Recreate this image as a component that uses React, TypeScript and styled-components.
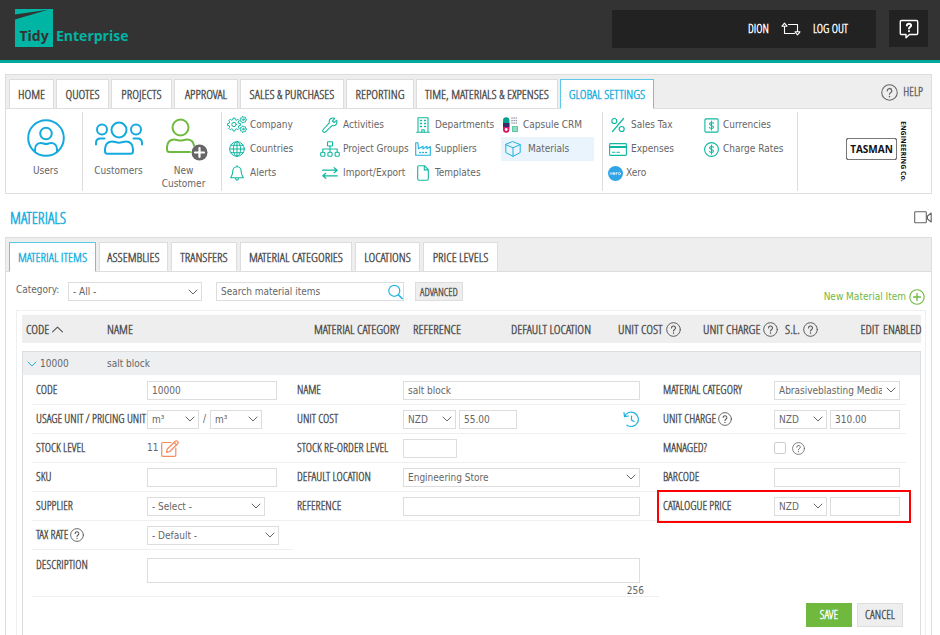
import React from "react";
import styled, { createGlobalStyle, css } from "styled-components";

const c = {
  dark: "#333333",
  darker: "#222222",
  teal: "#00b5a3",
  line: "#dddddd",
  soft: "#efefef",
  strip: "#eeeeee",
  text: "#666666",
  label: "#555555",
  blue: "#1fb1e0",
  green: "#6fb93f",
  orange: "#f58b62",
};

const narrow = `"Open Sans Condensed Light", "Open Sans Condensed", "Liberation Sans Narrow", sans-serif`;
const body = `"DejaVu Sans Condensed", "DejaVu Sans", sans-serif`;

const GlobalStyle = createGlobalStyle`
  * { box-sizing: border-box; }
  body {
    margin: 0; background: #fff; color: ${c.text}; font: 10px/12px ${body};
    fill: none; stroke: currentColor; stroke-linecap: round; stroke-linejoin: round;
  }
  svg { display: block; flex: none; }
  button, input, select, textarea { font: inherit; color: inherit; margin: 0; }
  a { color: inherit; text-decoration: none; }
`;

/* ---------- icons ---------- */

const HelpIcon = ({ size = 15 }: { size?: number }) => (
  <svg width={size} height={size} viewBox="0 0 16 16">
    <circle cx="8" cy="8" r="7.3" />
    <path d="M5.9 6.4a2.1 2.1 0 1 1 3.1 1.8c-.7.4-1 .7-1 1.4" strokeWidth="1.2" />
    <path d="M8 11.7v.2" strokeWidth="1.4" />
  </svg>
);

const Chevron = ({ size = 10, up = false }: { size?: number; up?: boolean }) => (
  <svg width={size} height={size} viewBox="0 0 10 10" strokeWidth="1">
    <path d={up ? "M.5 7.2 5 2.8l4.5 4.4" : "M1 3l4 4 4-4"} />
  </svg>
);

const UsersIcon = () => (
  <svg width="38" height="38" viewBox="0 0 38 38" strokeWidth="2" stroke="#14aade">
    <circle cx="19" cy="19" r="17.8" />
    <circle cx="19" cy="14.5" r="5.8" />
    <path d="M8 33v-2.500c0-4 2.500-6.500 6-6.500 2 0 3 1 5 1s3-1 5-1c3.500 0 6 2.500 6 6.500V33" />
  </svg>
);

const CustomersIcon = () => (
  <svg width="48" height="34" viewBox="0 0 48 34" strokeWidth="2" stroke="#14aade">
    <circle cx="24" cy="9" r="7.500" />
    <circle cx="7" cy="8.500" r="5" />
    <circle cx="41" cy="8.500" r="5" />
    <path d="M12.500 32.800c-2 0-2.500-1-2.500-2.500V28c0-4.500 3-7.500 7-7.500 2.500 0 4 1.200 7 1.200s4.500-1.200 7-1.200c4 0 7 3 7 7.500v2.300c0 1.500-.5 2.500-2.500 2.500z" />
    <path d="M1 23.500v-1.500c0-3 2-4.500 4.500-4.500h4M47 23.500v-1.500c0-3-2-4.500-4.500-4.500h-4" />
  </svg>
);

const NewCustomerIcon = () => (
  <svg width="49" height="43" viewBox="-7 0 49 43" strokeWidth="2" stroke={c.green}>
    <circle cx="14.500" cy="9.500" r="8" />
    <path d="M24 34H3.500C1.500 34 1 33 1 31.500V29c0-4.500 3-7.500 7-7.500 2.500 0 3.500 1 6.500 1s4-1 6.500-1c4 0 6.500 2.500 7 6" />
    <circle cx="33.500" cy="34.500" r="8" fill="#666" stroke="none" />
    <path d="M33.500 30v9M29 34.500h9" stroke="#fff" strokeWidth="2.200" />
  </svg>
);

const gear = (x: number, y: number, r: number, n: number) => {
  const pts: string[] = [];
  for (let i = 0; i < n; i++) {
    const a = (i / n) * Math.PI * 2;
    const step = (Math.PI * 2) / n;
    [[-0.3, r * 0.78], [-0.18, r], [0.18, r], [0.3, r * 0.78]].forEach(([t, q]) => {
      const b = a + t * step;
      pts.push(`${(x + q * Math.cos(b)).toFixed(2)},${(y + q * Math.sin(b)).toFixed(2)}`);
    });
  }
  return `M${pts.join("L")}Z`;
};

const icons: Record<string, React.ReactElement> = {
  company: (
    <svg width="20" height="18" viewBox="0 0 20 18" strokeWidth="1">
      <path d={gear(7, 8.500, 6.500, 8)} />
      <circle cx="7" cy="8.500" r="2.200" />
      <path d={gear(16.300, 3.700, 3.200, 7)} />
      <circle cx="16.300" cy="3.700" r=".8" />
      <path d={gear(16.300, 13.200, 3.200, 7)} />
      <circle cx="16.300" cy="13.200" r=".8" />
    </svg>
  ),
  globe: (
    <svg width="16" height="16" viewBox="0 0 16 16" strokeWidth="1">
      <circle cx="8" cy="8" r="7.300" />
      <ellipse cx="8" cy="8" rx="3.600" ry="7.300" />
      <path d="M8 .7v14.600M.7 8h14.600M1.800 4.300h12.400M1.800 11.700h12.400" />
    </svg>
  ),
  bell: (
    <svg width="14" height="16" viewBox="0 0 14 16" strokeWidth="1.100">
      <path d="M7 1.800c-3 0-4.200 2.400-4.200 4.700 0 3.300-1 4.300-2.200 6.200h12.800c-1.200-1.900-2.200-2.900-2.200-6.200 0-2.300-1.200-4.700-4.200-4.700zM7 .6v1M5.500 13c0 2.800 3 2.800 3 0" />
    </svg>
  ),
  wrench: (
    <svg width="16" height="16" viewBox="0 0 16 16" strokeWidth="1.100">
      <path d="M14.600 3.300 12 5.500l-1.600-1.400L12.600 1.300C9.600.1 6.500 2.300 7.300 5.900L1.200 12.500c-1.400 1.600.8 3.700 2.300 2.300l6.600-6.200c3.100.9 5.800-2 4.500-5.300z" />
    </svg>
  ),
  tree: (
    <svg width="20" height="16" viewBox="0 0 20 16" strokeWidth="1.100">
      <rect x="7.500" y=".8" width="5" height="4.200" rx=".6" />
      <rect x=".7" y="11.200" width="4.200" height="4" rx="1" />
      <rect x="7.900" y="11.200" width="4.200" height="4" rx="1" />
      <rect x="15.100" y="11.200" width="4.200" height="4" rx="1" />
      <path d="M10 5v6.200M2.800 11.200V8h14.400v3.200" />
    </svg>
  ),
  swap: (
    <svg width="16" height="12" viewBox="0 0 16 12" strokeWidth="1.200">
      <path d="M.6 3.200h14.600M12.200.7l3 2.500-3 2.500M15.400 8.800H.8M3.800 6.300l-3 2.500 3 2.500" />
    </svg>
  ),
  building: (
    <svg width="14" height="16" viewBox="0 0 14 16" strokeWidth="1.100">
      <path d="M.6 15.300h12.800M2 15.300V.8h10v14.500M5.800 15.300v-2.500h2.400v2.500" />
      <path d="M4.500 3.500h1M8.500 3.500h1M4.500 6.500h1M8.500 6.500h1M4.500 9.500h1M8.500 9.500h1" strokeWidth="1.400" />
    </svg>
  ),
  factory: (
    <svg width="16" height="14" viewBox="0 0 16 14" strokeWidth="1.100">
      <path d="M.7 13.300V.8h2.200l.5 6L8 4.200v2.700l4-2.700v2.700l3.300-2.400v8.800z" />
      <path d="M4.800 10.500h.6M7.800 10.500h.6M10.800 10.500h.6" strokeWidth="1.600" />
    </svg>
  ),
  file: (
    <svg width="12" height="16" viewBox="0 0 12 16" strokeWidth="1.100">
      <path d="M.7 2.200C.7 1.200 1.200.7 2 .7h5.500l3.800 4v9.100c0 1-.5 1.500-1.300 1.500H2c-.8 0-1.300-.5-1.300-1.500zM7.300.9v4h3.900" />
    </svg>
  ),
  capsule: (
    <svg width="16" height="16" viewBox="0 0 16 16" stroke="none">
      <path d="M0 8V3.500a3.200 3.200 0 0 1 6.400 0V8z" fill="#00a08a" />
      <path d="M0 8h6.400v4.500a3.200 3.200 0 0 1-6.400 0z" fill="#e0115f" />
      <path d="M0 6h6.400v4H0z" fill="#3b2a6b" />
      <circle cx="3.200" cy="12.500" r="1.400" fill="#fff" />
      <path d="M9 1h6M9 3.500h6M9 6h6" stroke="#8a8a9c" strokeWidth="1.400" strokeDasharray=".1 2" />
      <path d="M9 9h6v6H9z" fill="#5cc9a7" />
      <path d="M10.500 11h3M10.500 13h3" stroke="#fff" strokeWidth=".7" />
    </svg>
  ),
  cube: (
    <svg width="16" height="16" viewBox="0 0 16 16" strokeWidth="1">
      <path d="M8 .7 15.200 3.600v8L8 15.300.8 11.600v-8zM.8 3.600 8 6.800l7.200-3.200M8 6.800v8.500" />
    </svg>
  ),
  percent: (
    <svg width="14" height="16" viewBox="0 0 14 16" strokeWidth="1.200">
      <path d="M12.500 1.500 1.500 14.500" />
      <circle cx="3.300" cy="4" r="2.500" />
      <circle cx="10.700" cy="12" r="2.500" />
    </svg>
  ),
  card: (
    <svg width="18" height="13" viewBox="0 0 18 13" strokeWidth="1.100">
      <rect x=".6" y=".6" width="16.800" height="11.800" rx=".8" />
      <path d="M1 4h16" strokeWidth="2" />
      <path d="M3.500 9.200h2.500M8 9.200h2.500" />
    </svg>
  ),
  xero: (
    <svg width="15" height="15" viewBox="0 0 15 15" stroke="none">
      <circle cx="7.500" cy="7.500" r="7.500" fill="#2fa4e7" />
      <g stroke="#fff" strokeWidth=".7">
        <path d="M2 6.500l2 2M4 6.500l-2 2M5 7.600h2c0-1.500-2-1.500-2 0s1.500 1.300 1.800.8M8.200 8.700V6.600M8.200 7.200c.2-.6.700-.7 1.100-.6" />
        <circle cx="11.400" cy="7.600" r="1.100" />
      </g>
    </svg>
  ),
  dollarBox: (
    <svg width="15" height="15" viewBox="0 0 15 15" strokeWidth="1.100">
      <rect x=".9" y=".9" width="13.200" height="13.200" rx="1" />
      <path d="M9.500 5.300c-.4-1-3.900-1.300-4 .5 0 2 4 1.200 4 3.300 0 1.900-3.600 1.800-4.200.3M7.500 3v9" />
    </svg>
  ),
  dollarRound: (
    <svg width="15" height="15" viewBox="0 0 15 15" strokeWidth="1.100">
      <circle cx="7.500" cy="7.500" r="6.900" />
      <path d="M9.500 5.300c-.4-1-3.900-1.300-4 .5 0 2 4 1.200 4 3.300 0 1.900-3.600 1.800-4.200.3M7.500 3v9" />
    </svg>
  ),
};

/* ---------- top bar ---------- */

const Page = styled.div`
  display: flex;
  flex-direction: column;
`;

const TopBar = styled.header`
  display: flex;
  align-items: flex-start;
  height: 63px;
  padding: 9px 12px 0 15px;
  background: ${c.dark};
  border-bottom: 3px solid #00a99a;
`;

const Logo = styled.a`
  display: flex;
  align-items: flex-end;
  gap: 3px;
  margin-right: auto;
  color: ${c.teal};
  font: bold 14px/22px "Open Sans", sans-serif;
`;

const LogoMark = styled.span`
  display: flex;
  flex-direction: column;
  justify-content: space-between;
  width: 38px;
  height: 38px;
  background: ${c.teal};
  color: ${c.dark};
  text-align: center;
`;

const UserBox = styled.nav`
  display: flex;
  align-items: center;
  justify-content: flex-end;
  gap: 12px;
  width: 264px;
  height: 38px;
  margin: 1px 13px 0 0;
  padding-right: 28px;
  background: ${c.darker};
  color: #fff;
  font: bold 12px/14px ${narrow};
`;

const ChatButton = styled.button`
  display: flex;
  align-items: center;
  justify-content: center;
  width: 39px;
  height: 37px;
  margin-top: 1px;
  padding: 0;
  border: 0;
  background: ${c.darker};
  color: #fff;
`;

/* ---------- tab panels ---------- */

const Panel = styled.section`
  margin: 0 8px 0 5px;
  border: 1px solid ${c.line};
`;

const NavPanel = styled(Panel)`
  margin-top: 11px;
`;

const MainPanel = styled(Panel)`
  margin-top: 7px;
  border-bottom: 0;
`;

const TabStrip = styled.nav<{ $gap: number }>`
  display: flex;
  align-items: flex-end;
  gap: ${(p) => p.$gap}px;
  height: 34px;
  padding: 4px 8px 0 3px;
  background: ${c.strip};
  box-shadow: inset 0 -1px ${c.line};
`;

const Tab = styled.a<{ $active?: boolean; $w: number }>`
  display: flex;
  align-items: center;
  justify-content: center;
  width: ${(p) => p.$w}px;
  height: 30px;
  border: 1px solid ${c.line};
  background: #fff;
  color: ${c.label};
  font: bold 13px/14px ${narrow};
  white-space: nowrap;
  ${(p) =>
    p.$active &&
    css`
      border-color: #5cc8ea;
      border-bottom-color: #fff;
      color: ${c.blue};
    `}
`;

const HelpLink = styled.a`
  display: flex;
  align-items: center;
  align-self: center;
  gap: 5px;
  margin-left: auto;
  padding-bottom: 4px;
  font: bold 12px/14px ${narrow};
`;

const Ribbon = styled.div`
  display: flex;
  height: 84px;
  padding: 3px 0 2px;
`;

const Group = styled.div<{ $w?: number }>`
  display: flex;
  flex: ${(p) => (p.$w ? `0 0 ${p.$w}px` : "1")};
  justify-content: center;
  border-right: 1px solid ${c.line};
  &:last-child { border-right: 0; }
`;

const BigLinks = styled.div`
  display: flex;
  flex: 1;
  padding: 0 5px 0 3px;
  &:only-child > a:only-child { padding-left: 5px; }
`;

const BigLink = styled.a`
  display: flex;
  flex-direction: column;
  align-items: center;
  flex: 1;
  text-align: center;
  line-height: 13px;
`;

const BigIcon = styled.span<{ $top: number }>`
  height: 49px;
  padding-top: ${(p) => p.$top}px;
  margin-bottom: 3px;
`;

const LinkGrid = styled.div<{ $cols: string }>`
  display: grid;
  flex: 1;
  grid-template-columns: ${(p) => p.$cols};
  grid-template-rows: repeat(3, 24px);
  grid-auto-flow: column;
  padding: 1px 8px 0 5px;
`;

const IconLink = styled.a<{ $active?: boolean; $blue?: boolean }>`
  display: flex;
  align-items: center;
  gap: 3px;
  white-space: nowrap;
  background: ${(p) => (p.$active ? "#e9f4fd" : "transparent")};
  svg { color: ${(p) => (p.$blue ? c.blue : "#10b8a0")}; }
`;

const IconSlot = styled.span<{ $w: number }>`
  display: flex;
  justify-content: center;
  flex: 0 0 ${(p) => p.$w}px;
`;

const Tasman = styled.div`
  display: flex;
  align-items: center;
  justify-content: center;
  flex: 1;
  gap: 2px;
  padding-left: 24px;
  color: #111;
  font: bold 10px/12px "Open Sans", sans-serif;
`;

const TasmanBox = styled.span`
  padding: 4px 3px;
  border: 1px solid #111;
  border-radius: 2px;
  outline: 1px solid #777;
  outline-offset: -1px;
  margin-bottom: 6px;
`;

const TasmanSide = styled.span`
  writing-mode: vertical-rl;
  font-size: 7px;
  line-height: 8px;
`;

/* ---------- content ---------- */

const TitleRow = styled.div`
  display: flex;
  align-items: center;
  justify-content: space-between;
  height: 22px;
  margin: 14px 8px 0 10px;
  padding-bottom: 3px;
`;

const Title = styled.h1`
  margin: 0;
  color: ${c.blue};
  font: bold 16px/20px ${narrow};
`;

const Toolbar = styled.div`
  display: flex;
  align-items: flex-start;
  height: 38px;
  padding: 10px 6px 0 10px;
`;

const ToolLabel = styled.label`
  flex: 0 0 52px;
  line-height: 15px;
`;

const boxed = css`
  width: 100%;
  height: 19px;
  padding: 0 4px;
  border: 1px solid ${c.line};
  border-radius: 0;
  background: #fff;
`;

const Input = styled.input`
  ${boxed}
  outline: none;
  &::placeholder { color: ${c.text}; opacity: 1; }
`;

const Field = styled.span<{ $w?: number; $ml?: number }>`
  position: relative;
  display: block;
  flex: ${(p) => (p.$w ? `0 0 ${p.$w}px` : "1")};
  min-width: 0;
  margin-left: ${(p) => p.$ml || 0}px;
`;

const SelectBox = styled.select`
  ${boxed}
  appearance: none;
  padding: 1px 17px 0 4px;
`;

const Adorn = styled.span<{ $right: number }>`
  position: absolute;
  top: 50%;
  right: ${(p) => p.$right}px;
  transform: translateY(-50%);
  pointer-events: none;
`;

const Select = ({ w, ml, label, id, value }: { w?: number; ml?: number; label: string; id?: string; value: string }) => (
  <Field $w={w} $ml={ml}>
    <SelectBox id={id} aria-label={label} defaultValue={value}>
      <option>{value}</option>
    </SelectBox>
    <Adorn $right={4}>
      <Chevron />
    </Adorn>
  </Field>
);

const Text = ({ w, ml, label, id, value = "" }: { w?: number; ml?: number; label: string; id?: string; value?: string }) => (
  <Field $w={w} $ml={ml}>
    <Input id={id} aria-label={label} defaultValue={value} />
  </Field>
);

const Button = styled.button<{ $primary?: boolean; $small?: boolean }>`
  height: ${(p) => (p.$small ? 19 : 24)}px;
  width: ${(p) => (p.$small ? 48 : 46)}px;
  padding: 0;
  border: 1px solid ${(p) => (p.$primary ? c.green : c.line)};
  background: ${(p) => (p.$primary ? c.green : c.strip)};
  color: ${(p) => (p.$primary ? "#fff" : c.label)};
  font: bold ${(p) => (p.$small ? 11 : 12)}px/14px ${narrow};
`;

const NewItem = styled.a`
  display: flex;
  align-items: center;
  gap: 3px;
  margin-left: auto;
  padding-top: 7px;
  color: ${c.green};
`;

const ListBox = styled.div`
  margin: 0 5px 0 10px;
  padding: 4px 4px 0 5px;
  border: 1px solid ${c.soft};
  border-bottom: 0;
`;

const Table = styled.table`
  width: 100%;
  table-layout: fixed;
  border-collapse: separate;
  border-spacing: 0;
  tbody::before { content: ""; display: block; height: 8px; }
`;

const Th = styled.th<{ $w: number; $right?: boolean }>`
  width: ${(p) => p.$w}px;
  height: 28px;
  padding: 0 ${(p) => (p.$right ? 0 : 4)}px 0 4px;
  background: ${c.strip};
  color: ${c.label};
  font: bold 13px/14px ${narrow};
  text-align: ${(p) => (p.$right ? "right" : "left")};
  white-space: nowrap;
`;

const ThInner = styled.span`
  display: flex;
  align-items: center;
  gap: 3px;
`;

const SummaryCell = styled.td`
  height: 24px;
  padding: 0 4px;
  border-top: 1px solid ${c.line};
  background: #edeff0;
  &:first-child { border-left: 1px solid ${c.line}; }
  &:last-child { border-right: 1px solid ${c.line}; }
`;

const Expander = styled.button`
  display: flex;
  align-items: center;
  gap: 3px;
  padding: 0;
  border: 0;
  background: none;
  svg { color: ${c.blue}; }
`;

const DetailCell = styled.td`
  padding: 1px 14px 9px 9px;
  border: 1px solid ${c.line};
  border-width: 0 1px;
`;

const Form = styled.form`
  display: grid;
  grid-template-columns: 261fr 366fr 247fr;
`;

const Cell = styled.div<{ $label: number; $end: number; $span?: number; $tall?: boolean; $marked?: boolean }>`
  position: relative;
  display: grid;
  grid-column: span ${(p) => p.$span || 1};
  grid-template-columns: ${(p) => p.$label}px 1fr;
  align-items: ${(p) => (p.$tall ? "start" : "center")};
  height: ${(p) => (p.$tall ? 47 : 29)}px;
  padding: ${(p) => (p.$tall ? 8 : 0)}px ${(p) => p.$end}px 0 4px;
  border-bottom: 1px solid ${c.soft};
  ${(p) =>
    p.$marked &&
    css`
      &::after {
        content: "";
        position: absolute;
        inset: -2px -5px -3px -2px;
        border: 2px solid #f00;
        pointer-events: none;
      }
    `}
`;

const Empty = styled.div<{ $span: number }>`
  grid-column: span ${(p) => p.$span};
`;

const Label = styled.label`
  display: flex;
  align-items: center;
  gap: 2px;
  color: ${c.label};
  font: bold 12px/14px ${narrow};
  white-space: nowrap;
`;

const Controls = styled.div`
  display: flex;
  align-items: center;
`;

const Slash = styled.span`
  flex: 0 0 11px;
  text-align: center;
`;

const IconButton = styled.button<{ $color: string; $push?: boolean }>`
  margin-left: ${(p) => (p.$push ? "auto" : "3px")};
  padding: 0;
  border: 0;
  background: none;
  color: ${(p) => p.$color};
`;

const Check = styled.input`
  appearance: none;
  width: 12px;
  height: 12px;
  margin-right: 6px;
  border: 1px solid #ccc;
  border-radius: 2px;
  background: #fff;
`;

const Area = styled.textarea`
  ${boxed}
  display: block;
  height: 25px;
  resize: none;
`;

const Counter = styled.div`
  margin-right: -4px;
  padding-top: 2px;
  text-align: right;
`;

const Actions = styled.div`
  display: flex;
  justify-content: flex-end;
  gap: 5px;
  grid-column: 1 / -1;
  padding: 6px 3px 0 0;
`;

const tabs: [string, number][] = [
  ["HOME", 45], ["QUOTES", 53], ["PROJECTS", 61], ["APPROVAL", 64], ["SALES & PURCHASES", 104],
  ["REPORTING", 68], ["TIME, MATERIALS & EXPENSES", 142], ["GLOBAL SETTINGS", 94],
];

const subTabs: [string, number][] = [
  ["MATERIAL ITEMS", 87], ["ASSEMBLIES", 69], ["TRANSFERS", 66], ["MATERIAL CATEGORIES", 112], ["LOCATIONS", 65], ["PRICE LEVELS", 75],
];

type LinkDef = { icon: string; text: string; slot: number; blue?: boolean; active?: boolean };

const links: LinkDef[] = [
  { icon: "company", text: "Company", slot: 20 },
  { icon: "globe", text: "Countries", slot: 20 },
  { icon: "bell", text: "Alerts", slot: 20 },
  { icon: "wrench", text: "Activities", slot: 20 },
  { icon: "tree", text: "Project Groups", slot: 20 },
  { icon: "swap", text: "Import/Export", slot: 20 },
  { icon: "building", text: "Departments", slot: 18 },
  { icon: "factory", text: "Suppliers", slot: 18, blue: true },
  { icon: "file", text: "Templates", slot: 18 },
  { icon: "capsule", text: "Capsule CRM", slot: 19 },
  { icon: "cube", text: "Materials", slot: 24, blue: true, active: true },
];

const moneyLinks: LinkDef[] = [
  { icon: "percent", text: "Sales Tax", slot: 20 },
  { icon: "card", text: "Expenses", slot: 20 },
  { icon: "xero", text: "Xero", slot: 15 },
  { icon: "dollarBox", text: "Currencies", slot: 18 },
  { icon: "dollarRound", text: "Charge Rates", slot: 18 },
];

const Links = ({ items }: { items: LinkDef[] }) => (
  <>
    {items.map((l) => (
      <IconLink key={l.text} href="#" $active={l.active} $blue={l.blue}>
        <IconSlot $w={l.slot}>{icons[l.icon]}</IconSlot>
        {l.text}
      </IconLink>
    ))}
  </>
);

export default function App() {
  return (
    <Page>
      <GlobalStyle />
      <TopBar>
        <Logo href="#">
          <LogoMark>
            <svg width="38" height="12" viewBox="0 0 38 12" stroke="none">
              <path d="M0 5.500 33 .8 0 10.500z" fill={c.dark} />
            </svg>
            Tidy
          </LogoMark>
          Enterprise
        </Logo>
        <UserBox>
          <a href="#">DION</a>
          <svg width="20" height="14" viewBox="0 0 20 14" strokeWidth="1.100">
            <path d="M3.500 4.500V11.500H13.500M1 4.200 3.500 1.200 6 4.200zM7.500 2.500H16.500V9.500M14 9.800 16.500 12.800 19 9.800z" />
          </svg>
          <a href="#">LOG OUT</a>
        </UserBox>
        <ChatButton aria-label="Ask a question">
          <svg width="20" height="20" viewBox="0 0 20 20" strokeWidth="1.400">
            <path d="M2.500 1.500h15c.7 0 1.200.5 1.200 1.200v11.600c0 .7-.5 1.200-1.200 1.200h-7L7 18.700v-3.200H2.500c-.7 0-1.200-.5-1.200-1.200V2.700c0-.7.5-1.200 1.200-1.200z" />
            <path d="M7.900 6.400c.2-2.400 4.400-2.200 4.200.2-.1 1.400-2.100 1.500-2.100 3M10 12v.2" strokeWidth="2" />
          </svg>
        </ChatButton>
      </TopBar>

      <NavPanel>
        <TabStrip $gap={2}>
          {tabs.map(([t, w]) => (
            <Tab key={t} href="#" $w={w} $active={t === "GLOBAL SETTINGS"}>{t}</Tab>
          ))}
          <HelpLink href="#">
            <HelpIcon size={17} />
            HELP
          </HelpLink>
        </TabStrip>
        <Ribbon>
          <Group $w={77}>
            <BigLinks>
              <BigLink href="#">
                <BigIcon $top={7}><UsersIcon /></BigIcon>
                Users
              </BigLink>
            </BigLinks>
          </Group>
          <Group $w={139}>
            <BigLinks>
              <BigLink href="#">
                <BigIcon $top={9}><CustomersIcon /></BigIcon>
                Customers
              </BigLink>
              <BigLink href="#">
                <BigIcon $top={6}><NewCustomerIcon /></BigIcon>
                New
                <br />
                Customer
              </BigLink>
            </BigLinks>
          </Group>
          <Group $w={381}>
            <LinkGrid $cols="93px 94px 87px 1fr"><Links items={links} /></LinkGrid>
          </Group>
          <Group $w={195}>
            <LinkGrid $cols="94px 1fr"><Links items={moneyLinks} /></LinkGrid>
          </Group>
          <Group>
            <Tasman>
              <TasmanBox>TASMAN</TasmanBox>
              <TasmanSide>ENGINEERING Co.</TasmanSide>
            </Tasman>
          </Group>
        </Ribbon>
      </NavPanel>

      <TitleRow>
        <Title>MATERIALS</Title>
        <svg width="18" height="13" viewBox="0 0 18 13" strokeWidth="1.100">
          <path d="M1.500.7h10c.5 0 .8.300.8.800v9.500c0 .5-.3.800-.8.800h-10c-.5 0-.8-.3-.8-.8V1.500c0-.5.300-.8.800-.8zM13.500 5l3.700-3v9l-3.700-3z" />
        </svg>
      </TitleRow>

      <MainPanel>
        <TabStrip $gap={3}>
          {subTabs.map(([t, w]) => (
            <Tab key={t} href="#" $w={w} $active={t === "MATERIAL ITEMS"}>{t}</Tab>
          ))}
        </TabStrip>
        <Toolbar>
          <ToolLabel htmlFor="category">Category:</ToolLabel>
          <Select id="category" label="Category" w={134} value="- All -" />
          <Field $w={188} $ml={14}>
            <Input aria-label="Search material items" placeholder="Search material items" />
            <Adorn $right={1}>
              <svg width="15" height="15" viewBox="0 0 15 15" strokeWidth="1.200" stroke={c.blue}>
                <circle cx="6.300" cy="6.300" r="5.500" />
                <path d="m10.300 10.300 4 4" strokeWidth="1.600" />
              </svg>
            </Adorn>
          </Field>
          <Field $w={48} $ml={11}><Button $small type="button">ADVANCED</Button></Field>
          <NewItem href="#">
            New Material Item
            <svg width="16" height="16" viewBox="0 0 16 16" strokeWidth="1.100">
              <circle cx="8" cy="8" r="7.200" />
              <path d="M8 4.500v7M4.500 8h7" strokeWidth="1.300" />
            </svg>
          </NewItem>
        </Toolbar>

        <ListBox>
          <Table>
            <thead>
              <tr>
                <Th $w={81}><ThInner>CODE <Chevron size={11} up /></ThInner></Th>
                <Th $w={207}>NAME</Th>
                <Th $w={99}>MATERIAL CATEGORY</Th>
                <Th $w={98}>REFERENCE</Th>
                <Th $w={107}>DEFAULT LOCATION</Th>
                <Th $w={85}><ThInner>UNIT COST <HelpIcon /></ThInner></Th>
                <Th $w={82}><ThInner>UNIT CHARGE <HelpIcon /></ThInner></Th>
                <Th $w={55}><ThInner>S.L. <HelpIcon /></ThInner></Th>
                <Th $w={43} $right>EDIT</Th>
                <Th $w={42} $right>ENABLED</Th>
              </tr>
            </thead>
            <tbody>
              <tr>
                <SummaryCell><Expander type="button"><Chevron />10000</Expander></SummaryCell>
                <SummaryCell colSpan={9}>salt block</SummaryCell>
              </tr>
              <tr>
                <DetailCell colSpan={10}>
                  <Form onSubmit={(e) => e.preventDefault()}>
                    <Cell $label={111} $end={16}>
                      <Label htmlFor="code">CODE</Label>
                      <Controls><Text id="code" label="Code" value="10000" /></Controls>
                    </Cell>
                    <Cell $label={106} $end={19}>
                      <Label htmlFor="name">NAME</Label>
                      <Controls><Text id="name" label="Name" value="salt block" /></Controls>
                    </Cell>
                    <Cell $label={111} $end={6}>
                      <Label htmlFor="matcat">MATERIAL CATEGORY</Label>
                      <Controls><Select id="matcat" label="Material category" value="Abrasiveblasting Media" /></Controls>
                    </Cell>

                    <Cell $label={111} $end={16}>
                      <Label htmlFor="usage">USAGE UNIT / PRICING UNIT</Label>
                      <Controls>
                        <Select id="usage" label="Usage unit" w={52} value="m³" />
                        <Slash>/</Slash>
                        <Select label="Pricing unit" w={52} value="m³" />
                      </Controls>
                    </Cell>
                    <Cell $label={106} $end={19}>
                      <Label htmlFor="cost">UNIT COST</Label>
                      <Controls>
                        <Select label="Cost currency" w={53} value="NZD" />
                        <Text id="cost" label="Unit cost" w={58} ml={3} value="55.00" />
                        <IconButton type="button" $push $color={c.blue} aria-label="Cost history">
                          <svg width="17" height="17" viewBox="0 0 17 17" strokeWidth="1.200">
                            <path d="M1.500 5.500A7.200 7.200 0 1 1 4 14.200M1 1.500l.5 4.200 4-.7M8.500 5v4l2.500 1.500" />
                          </svg>
                        </IconButton>
                      </Controls>
                    </Cell>
                    <Cell $label={111} $end={6}>
                      <Label htmlFor="charge">UNIT CHARGE <HelpIcon size={14} /></Label>
                      <Controls>
                        <Select label="Charge currency" w={53} value="NZD" />
                        <Text id="charge" label="Unit charge" ml={3} value="310.00" />
                      </Controls>
                    </Cell>

                    <Cell $label={111} $end={16}>
                      <Label as="span">STOCK LEVEL</Label>
                      <Controls>
                        11
                        <IconButton type="button" $color={c.orange} aria-label="Edit stock level">
                          <svg width="19" height="17" viewBox="0 0 19 17" strokeWidth="1.200">
                            <path d="M10 2.500H2c-.8 0-1.300.5-1.300 1.300V15c0 .8.500 1.300 1.300 1.300h11.500c.8 0 1.300-.5 1.300-1.300V8" />
                            <path d="M5.500 12.300 6.300 9 14.200 1.300c1.600-1.400 3.900.8 2.500 2.400L8.800 11.500zM13 2.500l2.600 2.500" />
                          </svg>
                        </IconButton>
                      </Controls>
                    </Cell>
                    <Cell $label={106} $end={19}>
                      <Label htmlFor="reorder">STOCK RE-ORDER LEVEL</Label>
                      <Controls><Text id="reorder" label="Stock re-order level" w={54} /></Controls>
                    </Cell>
                    <Cell $label={111} $end={6}>
                      <Label htmlFor="managed">MANAGED?</Label>
                      <Controls><Check id="managed" type="checkbox" /><HelpIcon size={13} /></Controls>
                    </Cell>

                    <Cell $label={111} $end={16}>
                      <Label htmlFor="sku">SKU</Label>
                      <Controls><Text id="sku" label="SKU" /></Controls>
                    </Cell>
                    <Cell $label={106} $end={19}>
                      <Label htmlFor="loc">DEFAULT LOCATION</Label>
                      <Controls><Select id="loc" label="Default location" value="Engineering Store" /></Controls>
                    </Cell>
                    <Cell $label={111} $end={6}>
                      <Label htmlFor="barcode">BARCODE</Label>
                      <Controls><Text id="barcode" label="Barcode" /></Controls>
                    </Cell>

                    <Cell $label={111} $end={16}>
                      <Label htmlFor="supplier">SUPPLIER</Label>
                      <Controls><Select id="supplier" label="Supplier" w={118} value="- Select -" /></Controls>
                    </Cell>
                    <Cell $label={106} $end={19}>
                      <Label htmlFor="ref">REFERENCE</Label>
                      <Controls><Text id="ref" label="Reference" /></Controls>
                    </Cell>
                    <Cell $label={111} $end={6} $marked>
                      <Label htmlFor="catprice">CATALOGUE PRICE</Label>
                      <Controls>
                        <Select label="Catalogue currency" w={53} value="NZD" />
                        <Text id="catprice" label="Catalogue price" ml={3} />
                      </Controls>
                    </Cell>

                    <Cell $label={111} $end={14}>
                      <Label htmlFor="tax">TAX RATE <HelpIcon size={14} /></Label>
                      <Controls><Select id="tax" label="Tax rate" value="- Default -" /></Controls>
                    </Cell>
                    <Empty $span={2} />

                    <Cell $label={111} $end={19} $span={2} $tall>
                      <Label htmlFor="desc">DESCRIPTION</Label>
                      <div>
                        <Area id="desc" />
                        <Counter>256</Counter>
                      </div>
                    </Cell>
                    <Actions>
                      <Button $primary type="submit">SAVE</Button>
                      <Button type="button">CANCEL</Button>
                    </Actions>
                  </Form>
                </DetailCell>
              </tr>
            </tbody>
          </Table>
        </ListBox>
      </MainPanel>
    </Page>
  );
}
